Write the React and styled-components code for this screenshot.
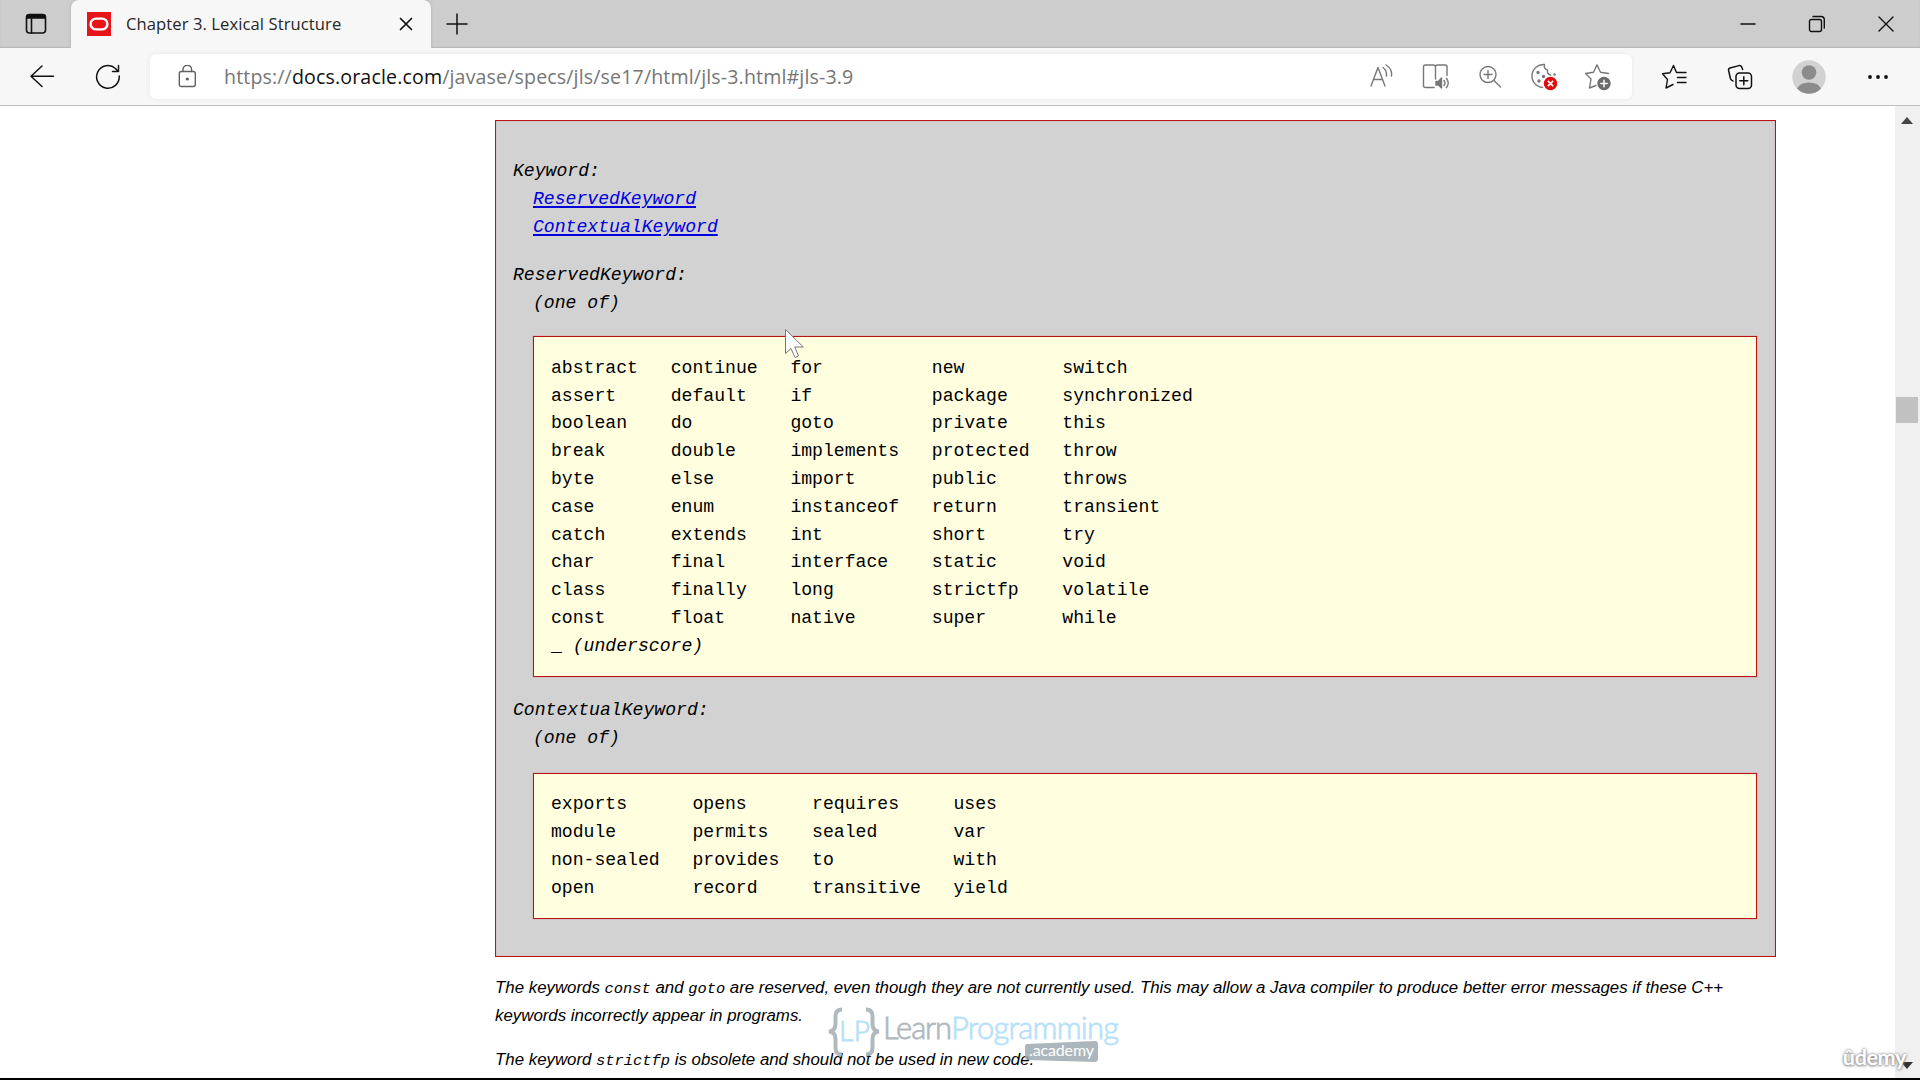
import React from "react";
import styled, { createGlobalStyle } from "styled-components";

const Global = createGlobalStyle`
  html, body { margin: 0; padding: 0; overflow: hidden; background: #fff; }
  * { box-sizing: border-box; }
`;

const ui = `"Open Sans", "Noto Sans", sans-serif`;
const mono = `"Liberation Mono", monospace`;

const Window = styled.div`
  width: 1920px;
  height: 1080px;
  display: flex;
  flex-direction: column;
  position: relative;
  overflow: hidden;
  background: #fff;
  border-bottom: 2px solid #000;
`;

const TabStrip = styled.header`
  height: 48px;
  flex: none;
  display: flex;
  background: #cdcdcd;
  box-shadow: inset 0 -1px 1px #b5b5b5;
`;

const StripButton = styled.div`
  width: ${(p) => p.$w}px;
  display: flex;
  align-items: center;
  justify-content: center;
`;

const Tab = styled.div`
  width: 360px;
  display: flex;
  align-items: center;
  padding: 0 18px 0 16px;
  background: #f7f7f7;
  border-radius: 8px 8px 0 0;
  box-shadow: 0 0 3px #aaa;
  clip-path: inset(0 -4px 0 -4px);
`;

const TabTitle = styled.span`
  flex: 1;
  margin: 0 0 2px 15px;
  font: 400 16.6px ${ui};
  letter-spacing: 0.08px;
  color: #262626;
  white-space: nowrap;
`;

const Spacer = styled.div`
  flex: 1;
`;

const Toolbar = styled.div`
  height: 58px;
  flex: none;
  display: flex;
  align-items: center;
  background: #f7f7f7;
  border-bottom: 1px solid #bdbdbd;
`;

const ToolSlot = styled.div`
  width: ${(p) => p.$w}px;
  margin-right: ${(p) => p.$after || 0}px;
  flex: none;
  display: flex;
  align-items: center;
  justify-content: center;
`;

const AddressBar = styled.div`
  width: 1482px;
  height: 45px;
  display: flex;
  align-items: center;
  background: #fff;
  border-radius: 6px;
  box-shadow: 0 0 4px #e6e6e6;
`;

const Url = styled.span`
  flex: 1;
  margin-bottom: 1px;
  font: 400 19.6px ${ui};
  letter-spacing: 0.14px;
  color: #767676;
  white-space: nowrap;
  b { font-weight: 400; color: #111; }
`;

const Viewport = styled.main`
  flex: 1;
  min-height: 0;
  display: flex;
`;

const Page = styled.div`
  flex: 1;
  padding: 14px 0 0 495px;
`;

const Scrollbar = styled.aside`
  width: 25px;
  display: flex;
  flex-direction: column;
  align-items: center;
  background: #f0f0f0;
  padding: 11px 1px 9px 0;
`;

const Thumb = styled.div`
  width: 22px;
  height: 26px;
  margin-top: 273px;
  margin-bottom: auto;
  background: #c1c1c1;
`;

const Grammar = styled.section`
  width: 1281px;
  height: 837px;
  border: 1px solid #b81414;
  box-shadow: inset 0 0 1px #e06060;
  background: #d2d2d2;
  padding: 37px 18px 0 17px;
  font: 18.13px/27.78px ${mono};
  color: #000;
`;

const Production = styled.div`
  margin-bottom: ${(p) => p.$gap}px;
  font-style: italic;
`;

const Rhs = styled.div`
  padding-left: 20px;
`;

const Link = styled.a`
  color: #0000dd;
  text-decoration: underline;
  text-underline-offset: 2px;
  text-decoration-thickness: 1.5px;
`;

const Listing = styled.div`
  height: ${(p) => p.$h}px;
  margin: ${(p) => p.$top}px 0 0 20px;
  border: 1px solid #b81414;
  box-shadow: 0 0 1px #e06060;
  background: #ffffe0;
  padding: ${(p) => p.$pad}px 0 0 17px;
  font-style: normal;
`;

const Columns = styled.div`
  display: grid;
  grid-template-columns: ${(p) => p.$cols};
`;

const Word = styled.div`
  white-space: pre;
`;

const Note = styled.p`
  margin: ${(p) => p.$top}px 0 0;
  font: italic 16.85px/27.78px "Liberation Sans", Arial, sans-serif;
  color: #000;
  white-space: nowrap;
  code { font: italic 15.4px/20px ${mono}; }
`;

const Overlay = styled.svg`
  position: absolute;
  left: ${(p) => p.$x}px;
  top: ${(p) => p.$y}px;
`;

const UdemyMark = styled.div`
  position: absolute;
  right: 14px;
  bottom: 8px;
  font: 700 21.6px Lato, sans-serif;
  letter-spacing: -0.4px;
  color: #fff;
  text-shadow: 0 0 3px #777, 0 1px 3px #999;
`;

function Icon({ w, h = w, c = "#111", s = 1.4, children }) {
  return (
    <svg width={w} height={h} viewBox={`0 0 ${w} ${h}`} fill="none" stroke={c} strokeWidth={s} strokeLinecap="round" strokeLinejoin="round">
      {children}
    </svg>
  );
}

const reserved = [
  ["abstract", "continue", "for", "new", "switch"],
  ["assert", "default", "if", "package", "synchronized"],
  ["boolean", "do", "goto", "private", "this"],
  ["break", "double", "implements", "protected", "throw"],
  ["byte", "else", "import", "public", "throws"],
  ["case", "enum", "instanceof", "return", "transient"],
  ["catch", "extends", "int", "short", "try"],
  ["char", "final", "interface", "static", "void"],
  ["class", "finally", "long", "strictfp", "volatile"],
  ["const", "float", "native", "super", "while"],
];

const contextual = [
  ["exports", "opens", "requires", "uses"],
  ["module", "permits", "sealed", "var"],
  ["non-sealed", "provides", "to", "with"],
  ["open", "record", "transitive", "yield"],
];

function WordGrid({ rows, cols }) {
  return (
    <Columns $cols={cols}>
      {rows.flat().map((w) => (
        <Word key={w}>{w}</Word>
      ))}
    </Columns>
  );
}

export default function App() {
  return (
    <Window>
      <Global />
      <TabStrip>
        <StripButton $w={71}>
          <Icon w={22} s={1.6}>
            <rect x="1.5" y="1.5" width="19" height="18.5" rx="3" />
            <path d="M2 2.5H20V5H2Z" fill="#111" />
            <path d="M6.5 6V20" />
          </Icon>
        </StripButton>
        <Tab>
          <svg width="24" height="24" viewBox="0 0 24 24">
            <rect width="24" height="24" fill="#e8141c" />
            <rect x="3.6" y="6.6" width="16.8" height="10.8" rx="5.4" fill="none" stroke="#fff" strokeWidth="2.4" />
          </svg>
          <TabTitle>Chapter 3. Lexical Structure</TabTitle>
          <Icon w={14} s={1.7}>
            <path d="M1.5 1.5L12.5 12.5M12.5 1.5L1.5 12.5" />
          </Icon>
        </Tab>
        <StripButton $w={52}>
          <Icon w={22} s={1.5}>
            <path d="M11 1V21M1 11H21" />
          </Icon>
        </StripButton>
        <Spacer />
        <StripButton $w={69}>
          <Icon w={16} s={1.5}>
            <path d="M1 8H15" />
          </Icon>
        </StripButton>
        <StripButton $w={69}>
          <Icon w={18} s={1.4}>
            <rect x="1.5" y="4.5" width="12" height="12" rx="2" />
            <path d="M5 1.5H13C15 1.5 16.3 3 16.3 5V13" />
          </Icon>
        </StripButton>
        <StripButton $w={69}>
          <Icon w={16} s={1.4}>
            <path d="M1 1L15 15M15 1L1 15" />
          </Icon>
        </StripButton>
      </TabStrip>
      <Toolbar>
        <ToolSlot $w={84}>
          <Icon w={26} s={1.5}>
            <path d="M24.5 12.3H2M13 2L2 12.3L13 22.5" />
          </Icon>
        </ToolSlot>
        <ToolSlot $w={48}>
          <Icon w={26} s={1.5}>
            <path d="M24.2 12A11.3 11.3 0 1 1 20.5 4.5L23.2 7.5M23.5 1.5V7.5H17.5" />
          </Icon>
        </ToolSlot>
        <ToolSlot $w={18} />
        <AddressBar>
          <ToolSlot $w={71} $after={3}>
            <Icon w={20} h={24} c="#606060" s={1.4}>
              <g transform="translate(3.3 -1)">
                <rect x="0" y="7.5" width="16" height="15" rx="2" />
                <path d="M3.7 7.5V5.5A4.3 4.3 0 0 1 12.3 5.5V7.5" />
                <circle cx="8" cy="15" r="0.9" fill="#606060" />
              </g>
            </Icon>
          </ToolSlot>
          <Url>
            https://<b>docs.oracle.com</b>/javase/specs/jls/se17/html/jls-3.html#jls-3.9
          </Url>
          <ToolSlot $w={54}>
            <Icon w={26} c="#777">
              <path d="M2 22L9 3.5L16 22M4.5 15.5H13.5M14 3.5Q18 6.5 17.5 12M17 1Q23.500 5 22.5 12" />
            </Icon>
          </ToolSlot>
          <ToolSlot $w={54}>
            <Icon w={28} c="#777">
              <path d="M12 24.5H3.5Q1.5 24.5 1.5 22.5V4Q1.5 2 3.5 2H11.5Q13.5 2 13.5 4V16M13.5 4Q13.5 2 15.5 2H23Q25 2 25 4V12.5" />
              <path d="M14 18.5H16.5L19.5 15V25L16.5 22H14Z" fill="#777" />
              <path d="M22 17.5Q24 20 22 22.5M24.5 15.5Q28 20 24.5 24.5" />
            </Icon>
          </ToolSlot>
          <ToolSlot $w={54}>
            <Icon w={24} c="#777">
              <circle cx="10" cy="9.5" r="8" />
              <path d="M16 15.5L22.5 22M10 5.5V13.5M6 9.5H14" />
            </Icon>
          </ToolSlot>
          <ToolSlot $w={54}>
            <Icon w={28} c="#777">
              <path d="M12.5 24.5A11.5 11.5 0 1 1 14.5 1.5C13.8 4.5 15 6.5 17.5 7C17 10 18.5 11.5 20.5 12" />
              <g fill="#777">
                <circle cx="8" cy="9.5" r="1" />
                <circle cx="13.5" cy="13.5" r="1" />
                <circle cx="9" cy="18" r="1" />
                <circle cx="24.5" cy="11.5" r="0.6" />
              </g>
              <circle cx="20.5" cy="20.5" r="6" fill="#e00b0b" stroke="#e00b0b" />
              <path d="M18.4 18.4L22.6 22.6M22.6 18.4L18.4 22.6" stroke="#fff" strokeWidth="1.8" />
            </Icon>
          </ToolSlot>
          <ToolSlot $w={54} $after={7}>
            <Icon w={28} c="#777">
              <path d="M12 22.5L5.5 25L7 16L1.5 10.5L9.5 9.2L13 1.8L16.5 9.2L24.5 10.5" />
              <circle cx="20" cy="20.5" r="6" fill="#6b6b6b" stroke="#6b6b6b" />
              <path d="M20 17.3V23.7M16.8 20.5H23.2" stroke="#fff" strokeWidth="1.5" />
            </Icon>
          </ToolSlot>
        </AddressBar>
        <ToolSlot $w={84}>
          <Icon w={26}>
            <path d="M12 20.5L5 24L6.5 15.5L1.5 9.8L9 8.8L12.5 1.5L15.5 8.5H25M16.5 13.5H25M16.5 18.5H25" />
          </Icon>
        </ToolSlot>
        <ToolSlot $w={48} $after={2}>
          <Icon w={26} s={1.5}>
            <rect x="9" y="9" width="15.5" height="15.5" rx="3.5" />
            <path d="M16.8 12.7V20.8M12.7 16.8H20.8M6 17L4.5 16Q3.7 15.5 3.4 14.5L1.6 6.5Q1.2 4.5 3 4L12 1.6Q14 1.2 14.7 3L15.7 5.5" />
          </Icon>
        </ToolSlot>
        <ToolSlot $w={86}>
          <svg width="34" height="34" viewBox="0 0 34 34">
            <circle cx="17" cy="17" r="16.7" fill="#d2d2d2" />
            <circle cx="17" cy="12.5" r="7.3" fill="#8b8b8b" />
            <path d="M5 28.5Q8 22.5 17 22.5T29 28.5Q24 33.7 17 33.7T5 28.5Z" fill="#8b8b8b" />
          </svg>
        </ToolSlot>
        <ToolSlot $w={52}>
          <Icon w={22} h={6} s={0}>
            <g fill="#111">
              <circle cx="3" cy="3" r="1.9" />
              <circle cx="11" cy="3" r="1.9" />
              <circle cx="19" cy="3" r="1.9" />
            </g>
          </Icon>
        </ToolSlot>
      </Toolbar>
      <Viewport>
        <Page>
          <Grammar>
            <Production $gap={21}>
              Keyword:
              <Rhs>
                <Link>ReservedKeyword</Link>
                <br />
                <Link>ContextualKeyword</Link>
              </Rhs>
            </Production>
            <Production $gap={20.4}>
              ReservedKeyword:
              <Rhs>(one of)</Rhs>
              <Listing $h={341} $top={18} $pad={18}>
                <WordGrid rows={reserved} cols="119.7px 119.7px 141.4px 130.6px 1fr" />
                <Word>
                  _ <i>(underscore)</i>
                </Word>
              </Listing>
            </Production>
            <Production $gap={0}>
              ContextualKeyword:
              <Rhs>(one of)</Rhs>
              <Listing $h={146} $top={20.4} $pad={17}>
                <WordGrid rows={contextual} cols="141.4px 119.7px 141.4px 1fr" />
              </Listing>
            </Production>
          </Grammar>
          <Note $top={17}>
            The keywords <code>const</code> and <code>goto</code> are reserved, even though they are not currently used. This may allow a Java compiler to produce better error messages if these C++
            <br />
            keywords incorrectly appear in programs.
          </Note>
          <Note $top={16.5}>
            The keyword <code>strictfp</code> is obsolete and should not be used in new code.
          </Note>
        </Page>
        <Scrollbar>
          <svg width="12" height="7">
            <path d="M0 7L6 0L12 7Z" fill="#444" />
          </svg>
          <Thumb />
          <svg width="12" height="7">
            <path d="M0 0L6 7L12 0Z" fill="#333" />
          </svg>
        </Scrollbar>
      </Viewport>
      <Overlay $x={784} $y={328} width="22" height="32" viewBox="0 0 22 32">
        <path d="M1.5 1.5V25.500L7 20.500L11 29.500L14.500 28L10.800 19H19.300Z" fill="#fff" stroke="#777" strokeWidth="1" strokeLinejoin="round" />
      </Overlay>
      <Overlay $x={826} $y={1002} width="300" height="64" viewBox="0 0 300 64">
        <g opacity="0.85">
          <g fill="none" stroke="#a3adb3" strokeWidth="4">
            <path d="M16 7.5Q9.500 7.5 9.500 14V22Q9.500 29 3 29.500Q9.500 30 9.500 37V46Q9.500 52.500 16 52.500" />
            <path d="M40 7.5Q46.500 7.5 46.500 14V22Q46.500 29 53 29.500Q46.500 30 46.500 37V46Q46.500 52.500 40 52.500" />
          </g>
          <text x="13" y="39" fontFamily="Lato, sans-serif" fontWeight="300" fontSize="28" fill="#abdcf9" stroke="#abdcf9" strokeWidth="0.9" textLength="31">LP</text>
          <text x="57" y="36.5" fontFamily="Lato, sans-serif" fontWeight="300" fontSize="31" fill="#a3adb3" stroke="#a3adb3" strokeWidth="0.8" textLength="69">Learn</text>
          <text x="125" y="36.5" fontFamily="Lato, sans-serif" fontWeight="300" fontSize="31" fill="#abdcf9" stroke="#abdcf9" strokeWidth="0.8" textLength="168">Programming</text>
          <path d="M201 42L269 39Q272 39 272 42V56Q272 60 269 60L202 58Q199 58 199 55V45Q199 42 201 42Z" fill="#9eabb2" />
          <text x="203" y="54" fontFamily="Lato, sans-serif" fontSize="16" fill="#fff" textLength="65">.academy</text>
        </g>
      </Overlay>
      <UdemyMark>ûdemy</UdemyMark>
    </Window>
  );
}
